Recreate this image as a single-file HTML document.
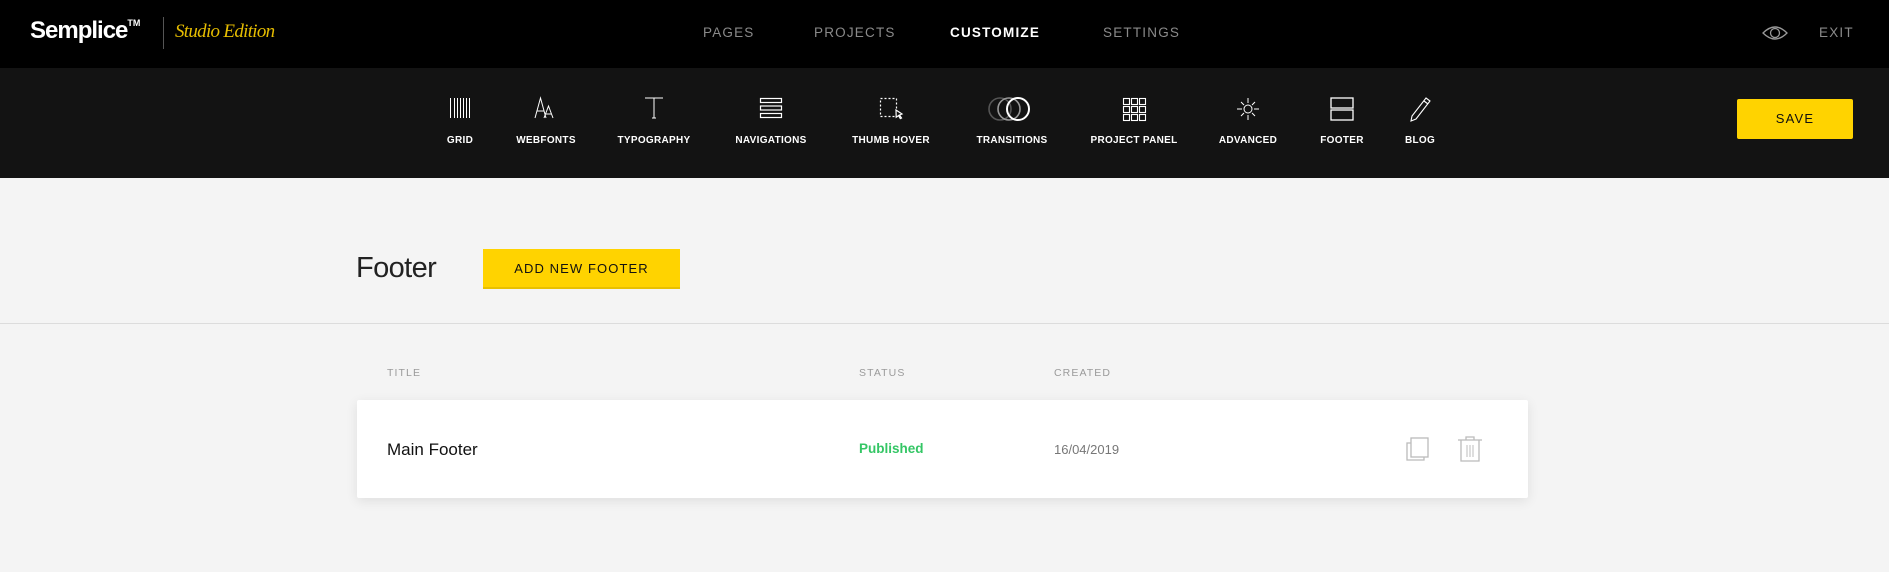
<!DOCTYPE html>
<html><head><meta charset="utf-8"><style>
*{margin:0;padding:0;box-sizing:border-box}
body{width:1889px;height:572px;background:#f4f4f4;font-family:"Liberation Sans",sans-serif;position:relative;overflow:hidden}
.a{position:absolute}
.top{left:0;top:0;width:1889px;height:68px;background:#000}
.sub{left:0;top:68px;width:1889px;height:110px;background:#131313}
.nav{top:25px;font-size:13.5px;letter-spacing:1.2px;color:#8a8a8a;line-height:16px}
.lbl{top:135px;font-size:10px;font-weight:bold;color:#fff;letter-spacing:.3px;transform:translateX(-50%);white-space:nowrap;line-height:12px}
.ic{top:96px;transform:translateX(-50%)}
.hd{top:367px;font-size:10.5px;color:#9a9a9a;letter-spacing:1.1px}
</style></head><body>
<div class="a top"></div>
<div class="a" style="left:30px;top:17px;color:#fff;font-size:24px;font-weight:bold;letter-spacing:-1px">Semplice<sup style="font-size:9px;vertical-align:12px;letter-spacing:0">TM</sup></div>
<div class="a" style="left:163px;top:17px;width:1px;height:32px;background:#555"></div>
<div class="a" style="left:175px;top:21px;color:#e6bd00;font-family:'Liberation Serif',serif;font-style:italic;font-size:19px;letter-spacing:-.7px">Studio Edition</div>
<div class="a nav" style="left:703px">PAGES</div>
<div class="a nav" style="left:814px">PROJECTS</div>
<div class="a nav" style="left:950px;color:#fff;font-weight:bold">CUSTOMIZE</div>
<div class="a nav" style="left:1103px">SETTINGS</div>
<svg class="a" style="left:1762px;top:24px" width="26" height="18" viewBox="0 0 26 18"><path d="M1 9 Q13 -3 25 9 Q13 21 1 9Z" fill="none" stroke="#999" stroke-width="1.3"/><circle cx="13" cy="9" r="4.5" fill="none" stroke="#999" stroke-width="1.3"/></svg>
<div class="a nav" style="left:1819px">EXIT</div>

<div class="a sub"></div>
<svg class="a ic" style="left:460px" width="24" height="24" viewBox="0 0 24 24" stroke="#fff" stroke-width="1"><path d="M2.5 2v20M6.5 2v20M9.5 2v20M12.5 2v20M15.5 2v20M18.5 2v20M21.5 2v20"/></svg>
<svg class="a ic" style="left:546px" width="28" height="24" viewBox="0 0 28 24" stroke="#fff" stroke-width="1" fill="none"><path d="M3 22L8.5 2L14 22M5 15h7M12 22L16.5 10L21 22M13.5 18h6"/></svg>
<svg class="a ic" style="left:654px" width="24" height="24" viewBox="0 0 24 24" stroke="#fff" stroke-width="1" fill="none"><path d="M3 2h18M12 2v20M10 22h4"/></svg>
<svg class="a ic" style="left:771px" width="26" height="24" viewBox="0 0 26 24" stroke="#fff" stroke-width="1.2" fill="none"><rect x="2.5" y="2.5" width="21" height="4"/><rect x="2.5" y="10" width="21" height="4"/><rect x="2.5" y="17.5" width="21" height="4"/></svg>
<svg class="a ic" style="left:891px" width="26" height="24" viewBox="0 0 26 24" stroke="#fff" stroke-width="1.2" fill="none"><rect x="2.5" y="2.5" width="16" height="18" stroke-dasharray="2 2"/><path d="M18 14l6 4-2.5 1 2 3-1.2.6-1.8-3-2.3 1.6z" fill="#131313"/></svg>
<svg class="a ic" style="left:1012px" width="50" height="26" viewBox="0 0 50 26" fill="none" stroke-width="1.6"><circle cx="13" cy="13" r="11" stroke="#555"/><circle cx="22" cy="13" r="11" stroke="#999"/><circle cx="31" cy="13" r="11" stroke="#fff" stroke-width="2"/></svg>
<svg class="a ic" style="left:1134px" width="26" height="26" viewBox="0 0 26 26" stroke="#fff" stroke-width="1.1" fill="none"><rect x="2.5" y="2.5" width="6" height="6"/><rect x="10.5" y="2.5" width="6" height="6"/><rect x="18.5" y="2.5" width="6" height="6"/><rect x="2.5" y="10.5" width="6" height="6"/><rect x="10.5" y="10.5" width="6" height="6"/><rect x="18.5" y="10.5" width="6" height="6"/><rect x="2.5" y="18.5" width="6" height="6"/><rect x="10.5" y="18.5" width="6" height="6"/><rect x="18.5" y="18.5" width="6" height="6"/></svg>
<svg class="a ic" style="left:1248px" width="26" height="26" viewBox="0 0 26 26" stroke="#fff" stroke-width="1" fill="none"><circle cx="13" cy="13" r="4"/><path d="M13 2v5M13 19v5M2 13h5M19 13h5M6 6l3 3M17 17l3 3M20 6l-3 3M6 20l3-3"/></svg>
<svg class="a ic" style="left:1342px" width="26" height="26" viewBox="0 0 26 26" stroke="#fff" stroke-width="1.3" fill="none"><rect x="2" y="2" width="22" height="10"/><rect x="2" y="14" width="22" height="10"/></svg>
<svg class="a ic" style="left:1420px" width="26" height="26" viewBox="0 0 26 26" stroke="#fff" stroke-width="1.1" fill="none"><path d="M19 2l4 3L9 23l-5 2 1-5z M17 5l4 3"/></svg>
<div class="a lbl" style="left:460px">GRID</div>
<div class="a lbl" style="left:546px">WEBFONTS</div>
<div class="a lbl" style="left:654px">TYPOGRAPHY</div>
<div class="a lbl" style="left:771px">NAVIGATIONS</div>
<div class="a lbl" style="left:891px">THUMB HOVER</div>
<div class="a lbl" style="left:1012px">TRANSITIONS</div>
<div class="a lbl" style="left:1134px">PROJECT PANEL</div>
<div class="a lbl" style="left:1248px">ADVANCED</div>
<div class="a lbl" style="left:1342px">FOOTER</div>
<div class="a lbl" style="left:1420px">BLOG</div>
<div class="a" style="left:1737px;top:99px;width:116px;height:40px;background:#ffd300;border-radius:2px;font-size:13px;letter-spacing:1.2px;text-align:center;line-height:40px;color:#111">SAVE</div>

<div class="a" style="left:356px;top:252px;font-size:29px;color:#222;letter-spacing:-.6px">Footer</div>
<div class="a" style="left:483px;top:249px;width:197px;height:40px;background:#ffd300;border-bottom:2px solid #e8c000;font-size:13px;letter-spacing:1.1px;text-align:center;line-height:39px;color:#111">ADD NEW FOOTER</div>
<div class="a" style="left:0;top:323px;width:1889px;height:1px;background:#dcdcdc"></div>
<div class="a hd" style="left:387px">TITLE</div>
<div class="a hd" style="left:859px">STATUS</div>
<div class="a hd" style="left:1054px">CREATED</div>
<div class="a" style="left:357px;top:400px;width:1171px;height:98px;background:#fff;border-radius:2px;box-shadow:0 3px 12px rgba(0,0,0,.09)"></div>
<div class="a" style="left:387px;top:440px;font-size:17px;color:#111">Main Footer</div>
<div class="a" style="left:859px;top:441px;font-size:13.5px;color:#34c665;font-weight:bold">Published</div>
<div class="a" style="left:1054px;top:442px;font-size:13px;color:#777">16/04/2019</div>
<svg class="a" style="left:1405px;top:436px" width="26" height="26" viewBox="0 0 26 26" fill="none" stroke="#bbb" stroke-width="1.3"><path d="M6 7H2v17h17v-3"/><rect x="6" y="2" width="17" height="19" fill="#fff"/></svg>
<svg class="a" style="left:1457px;top:436px" width="26" height="26" viewBox="0 0 26 26" fill="none" stroke="#bbb" stroke-width="1.3"><path d="M1 4h24M9 4V1h8v3M4 4v21h18V4"/><path d="M10 9v12M13 9v12M16 9v12" stroke="#ccc"/></svg>
</body></html>
